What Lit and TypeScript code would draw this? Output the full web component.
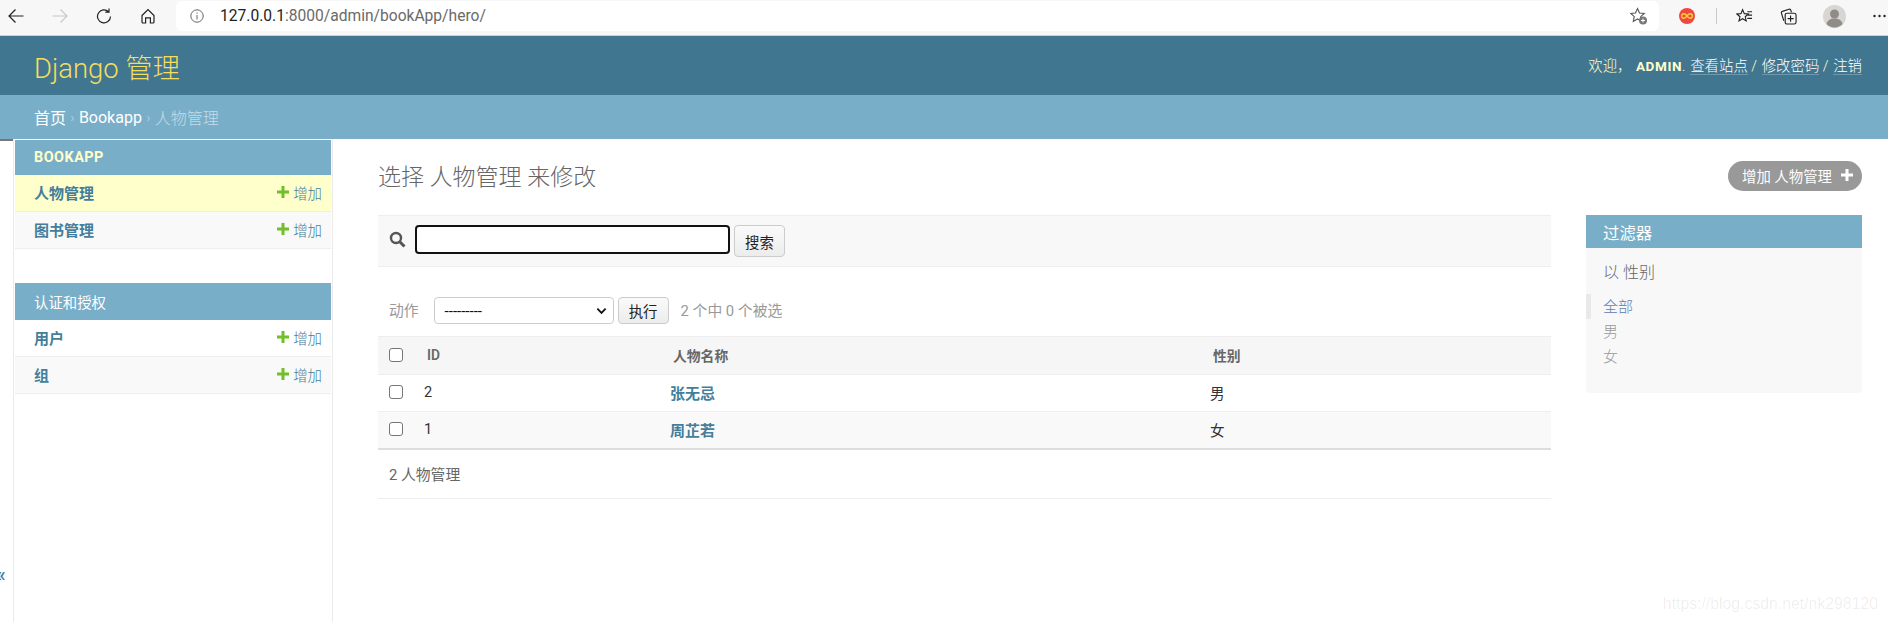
import { LitElement, html, css } from "lit";
import { customElement } from "lit/decorators.js";

const plus = (c: string, s = 12) => html`<svg width=${s} height=${s} viewBox="0 0 12 12"><path d="M4.500 0h3v4.500H12v3H7.500V12h-3V7.500H0v-3h4.500z" fill=${c}/></svg>`;

@customElement("app-root")
export class AppRoot extends LitElement {
  static styles = css`
    :host { display: block; width: 1888px; height: 622px; overflow: hidden; position: relative; background: #fff;
      font-family: Roboto, "Noto Sans CJK SC", sans-serif; font-size: 14.4px; color: #333; }
    * { box-sizing: border-box; }
    a { text-decoration: none; color: inherit; }
    .browser { height: 36px; background: #f7f7f7; border-bottom: 1px solid #d0d0d0; display: flex; align-items: flex-start; }
    .nav { width: 176px; height: 31px; display: flex; align-items: center; padding-left: 8px; gap: 28px; flex: none; }
    .nav svg { display: block; }
    .addr { width: 1483px; height: 30px; margin-top: 1px; background: #fff; border-radius: 6px; display: flex; align-items: center; padding: 0 11px 0 14px; flex: none; font-size: 15.6px; color: #6a6a6a; font-family: Roboto, sans-serif; }
    .addr b { font-weight: 400; color: #222; }
    .addr .url { margin-left: 16px; flex: 1; }
    .tools { flex: 1; height: 32px; display: flex; align-items: center; }
    .tools > * { flex: none; }
    .t1 { margin-left: 20px; }
    .sep { width: 1px; height: 16px; background: #c8c8c8; margin-left: 21px; }
    .t2 { margin-left: 19px; }
    .t3 { margin-left: 27px; }
    .t4 { margin-left: 26px; }
    .t5 { margin-left: 27px; }

    .header { height: 59px; background: #417690; display: flex; align-items: center; justify-content: space-between; padding: 0 26px 0 34px; }
    .brand { font-size: 27.4px; font-weight: 300; color: #f5dd5d; }
    .user { font-size: 14.4px; font-weight: 300; color: #ffc; margin-top: -2px; }
    .user strong { font-weight: 700; margin-left: 1px; font-size: 13.5px; letter-spacing: .6px; }
    .user a { color: #fff; border-bottom: 1px solid rgba(255,255,255,.25); line-height: 1.05; display: inline-block; margin-left: 1.2px; }
    .crumb { height: 44px; background: #79aec8; display: flex; align-items: center; padding-left: 34px; font-size: 16px; color: #c4dce8; font-weight: 300; }
    .crumb a { color: #fff; font-weight: 400; }
    .crumb i { font-style: normal; margin: 0 4.500px; font-size: 13px; }

    .body { display: flex; height: 483px; }
    .side { width: 320px; margin-left: 13px; flex: none; padding: 1px 1px 0; border-left: 1px solid #eaeaea; border-right: 1px solid #eaeaea; }
    .cap { height: 35px; background: #79aec8; color: #ffc; font-size: 14.4px; font-weight: 700; letter-spacing: .5px; display: flex; align-items: center; padding-left: 19px; }
    .cap.alt { height: 37px; color: #fff; font-weight: 400; letter-spacing: 0; margin-top: 34px; }
    .row { height: 37px; border-bottom: 1px solid #eee; display: flex; align-items: center; justify-content: space-between; padding: 0 9px 2px 19px; color: #447e9b; background: #fff; }
    .row.odd { background: #f9f9f9; }
    .row.cur { background: #ffc; }
    .row b { font-size: 15px; font-weight: 600; }
    .row span { display: flex; align-items: center; gap: 4px; font-size: 14.4px; font-weight: 300; }

    .main { flex: 1; min-width: 0; padding: 19px 26px 0 45px; }
    .top { display: flex; justify-content: space-between; align-items: flex-start; height: 57px; }
    h1 { margin: 5px 0 0; font-size: 23px; font-weight: 300; color: #666; line-height: 30px; }
    .addbtn { margin-top: 3px; height: 30px; width: 134px; background: #999; border-radius: 15px; color: #fff; display: flex; align-items: center; justify-content: flex-start; gap: 9px; padding: 0 0 2px 14px; font-size: 14.4px; }
    .cols { display: flex; gap: 35px; }
    .list { width: 1173px; flex: none; }
    .search { height: 52px; background: #f8f8f8; border-top: 1px solid #eee; border-bottom: 1px solid #eee; display: flex; align-items: flex-start; padding: 9px 0 0 11px; }
    .search svg { margin: 6px 9px 0 0; }
    .search .input { width: 315px; height: 29px; border: 2px solid #111; border-radius: 4px; background: #fff; }
    .btn { height: 32px; width: 51px; justify-content: center; background: linear-gradient(#fafafa, #ececec); border: 1px solid #ccc; border-radius: 4px; font-size: 14.4px; color: #222; display: flex; align-items: center; margin-left: 4px; }
    .actions { height: 69px; display: flex; align-items: center; padding: 30px 0 12px 11px; color: #999; font-size: 14.8px; }
    .actions > span { margin-top: -2px; }
    .sel { width: 180px; height: 27px; border: 1px solid #ccc; border-radius: 4px; margin-left: 15px; background: #fff; display: flex; align-items: center; justify-content: space-between; padding: 0 6px 0 10px; color: #111; font-size: 15px; }
    .actions .btn { height: 27px; margin-left: 4px; }
    .count { margin-left: 12px; }
    .tr { display: grid; grid-template-columns: 46px 246px 540px 1fr; align-items: center; }
    .th { height: 39px; background: #f6f6f6; border-top: 1px solid #eee; border-bottom: 1px solid #eee; font-size: 13.8px; font-weight: 600; color: #666; padding-bottom: 1px; }
    .th div:nth-child(n+2) { padding-left: 3px; }
    .td { height: 37px; border-bottom: 1px solid #eee; font-size: 14.6px; color: #333; padding-bottom: 2px; }
    .td.odd { background: #f9f9f9; border-bottom: 2px solid #ddd; height: 38px; }
    .td a { color: #447e9b; font-weight: 600; font-size: 15px; }
    .cb { width: 14px; height: 14px; border: 1px solid #767676; border-radius: 3px; background: #fff; margin-left: 11px; }
    .pager { height: 49px; border-bottom: 1px solid #eee; display: flex; align-items: center; padding: 0 0 2px 11px; color: #666; font-size: 14.8px; }
    .filter { width: 276px; height: 178px; flex: none; background: #f8f8f8; }
    .filter h2 { margin: 0; height: 33px; background: #79aec8; color: #fff; font-size: 16.4px; font-weight: 400; display: flex; align-items: center; padding-left: 17px; }
    .filter h3 { margin: 15px 0 11px; padding-left: 17px; font-size: 16px; font-weight: 300; color: #666; line-height: 20px; }
    .filter ul { list-style: none; margin: 0; padding: 0; }
    .filter li { height: 25px; display: flex; align-items: center; padding: 0 0 2px 17px; font-size: 15px; color: #999; font-weight: 300; }
    .filter li.on { color: #5b80b2; border-left: 5px solid #e9e9e9; padding-left: 12px; }

    .tab { position: absolute; left: 0; top: 139px; width: 13px; height: 2px; background: #777; }
    .tog { position: absolute; left: -4px; top: 562px; color: #447e9b; font-size: 20px; font-weight: 500; line-height: 24px; }
    .wm { position: absolute; right: 10px; bottom: 9px; color: rgba(0,0,0,.07); font-size: 15.8px; font-family: "Liberation Sans", sans-serif; }
  `;

  render() {
    const grn = "#70bf2b";
    return html`
      <div class="browser">
        <div class="nav">
          <svg width="16" height="16" viewBox="0 0 16 16" fill="none" stroke="#222" stroke-width="1.200"><path d="M15.500 8H1M7.500 1.500 1 8l6.500 6.500"/></svg>
          <svg width="16" height="16" viewBox="0 0 16 16" fill="none" stroke="#c8c8c8" stroke-width="1.200"><path d="M.5 8H15M8.500 1.500 15 8l-6.500 6.500"/></svg>
          <svg width="16" height="16" viewBox="0 0 16 16" fill="none" stroke="#222" stroke-width="1.200"><path d="M14.500 8.500a6.500 6.500 0 1 1-2-4.800M13 .5v3.700H9.300"/></svg>
          <svg width="16" height="16" viewBox="0 0 16 16" fill="none" stroke="#222" stroke-width="1.200"><path d="M2 7.500 8 1.500l6 6V14a1 1 0 0 1-1 1h-2.600V9.800H5.600V15H3a1 1 0 0 1-1-1z"/></svg>
        </div>
        <div class="addr">
          <svg width="14" height="14" viewBox="0 0 14 14" fill="none" stroke="#666"><circle cx="7" cy="7" r="6.200"/><path d="M7 6v4.500M7 3.500v1.200"/></svg>
          <div class="url"><b>127.0.0.1</b>:8000/admin/bookApp/hero/</div>
          <svg width="18" height="18" viewBox="0 0 18 18"><path d="M7.500 1.500 9.500 6l4.800.5-3.600 3.200 1 4.800-4.200-2.500-4.200 2.500 1-4.800L.7 6.500 5.500 6z" fill="none" stroke="#555" stroke-width="1.100"/><circle cx="13" cy="13.500" r="4" fill="#777"/><path d="M11 13.500h4M13 11.500v4" stroke="#fff"/></svg>
        </div>
        <div class="tools">
          <svg class="t1" width="16" height="16" viewBox="0 0 18 18"><circle cx="9" cy="9" r="9" fill="#f0483e"/><path d="M9 9C7.500 7 6.500 6.500 5.500 6.500a2.500 2.500 0 0 0 0 5C6.500 11.500 7.500 11 9 9s2.500-2.500 3.500-2.500a2.500 2.500 0 0 1 0 5c-1 0-2-.5-3.500-2.500z" fill="none" stroke="#fbd03a" stroke-width="1.500"/></svg>
          <div class="sep"></div>
          <svg class="t2" width="17" height="17" viewBox="0 0 18 18" fill="none" stroke="#222" stroke-width="1.200"><path d="M7 1.800 8.800 6l4.200.4-3.200 2.900 1 4.400L7 11.400l-3.800 2.300 1-4.400L1 6.400 5.200 6zM12 4h5M12.500 7.500H17M12 11h5"/></svg>
          <svg class="t3" width="17" height="17" viewBox="0 0 18 18" fill="none" stroke="#222" stroke-width="1.200"><path d="M4 13.500 1.500 5.500a1.500 1.500 0 0 1 1-1.900L9.500 1.300a1.500 1.500 0 0 1 1.900 1l.7 2.200"/><rect x="5.500" y="5.500" width="11.500" height="11.500" rx="2"/><path d="M11.200 8v6.500M8 11.200h6.500"/></svg>
          <svg class="t4" width="23" height="23" viewBox="0 0 23 23"><circle cx="11.500" cy="11.500" r="11.500" fill="#d8d6d3"/><circle cx="11.500" cy="9" r="4.500" fill="#8f8b87"/><path d="M3.500 19c1-4 4-5.500 8-5.500s7 1.500 8 5.500a11 11 0 0 1-16 0z" fill="#8f8b87"/></svg>
          <svg class="t5" width="13" height="4" viewBox="0 0 13 4"><circle cx="1.500" cy="2" r="1.200" fill="#222"/><circle cx="6.500" cy="2" r="1.200" fill="#222"/><circle cx="11.500" cy="2" r="1.200" fill="#222"/></svg>
        </div>
      </div>

      <div class="header">
        <div class="brand">Django 管理</div>
        <div class="user">欢迎， <strong>ADMIN</strong>. <a>查看站点</a> / <a>修改密码</a> / <a>注销</a></div>
      </div>
      <div class="crumb"><a>首页</a><i>›</i><a>Bookapp</a><i>›</i>人物管理</div>

      <div class="body">
        <div class="side">
          <div class="cap">BOOKAPP</div>
          <div class="row cur"><b>人物管理</b><span>${plus(grn)}增加</span></div>
          <div class="row odd"><b>图书管理</b><span>${plus(grn)}增加</span></div>
          <div class="cap alt">认证和授权</div>
          <div class="row"><b>用户</b><span>${plus(grn)}增加</span></div>
          <div class="row odd"><b>组</b><span>${plus(grn)}增加</span></div>
        </div>
        <div class="main">
          <div class="top">
            <h1>选择 人物管理 来修改</h1>
            <a class="addbtn">增加 人物管理 ${plus("#fff")}</a>
          </div>
          <div class="cols">
            <div class="list">
              <div class="search">
                <svg width="17" height="17" viewBox="0 0 17 17" fill="none" stroke="#555"><circle cx="7" cy="7" r="5" stroke-width="2.400"/><path d="M11 11l4.500 4.500" stroke-width="3"/></svg>
                <div class="input"></div>
                <div class="btn">搜索</div>
              </div>
              <div class="actions">
                <span>动作</span>
                <div class="sel"><span>---------</span><svg width="11" height="8" viewBox="0 0 12 8" fill="none" stroke="#111" stroke-width="2"><path d="M1.500 1.500 6 6l4.500-4.500"/></svg></div>
                <div class="btn">执行</div>
                <span class="count">2 个中 0 个被选</span>
              </div>
              <div class="tr th"><div><div class="cb"></div></div><div>ID</div><div>人物名称</div><div>性别</div></div>
              <div class="tr td"><div><div class="cb"></div></div><div>2</div><div><a>张无忌</a></div><div>男</div></div>
              <div class="tr td odd"><div><div class="cb"></div></div><div>1</div><div><a>周芷若</a></div><div>女</div></div>
              <div class="pager">2 人物管理</div>
            </div>
            <div class="filter">
              <h2>过滤器</h2>
              <h3>以 性别</h3>
              <ul><li class="on">全部</li><li>男</li><li>女</li></ul>
            </div>
          </div>
        </div>
      </div>
      <div class="tab"></div>
      <div class="tog">«</div>
      <div class="wm">https://blog.csdn.net/nk298120</div>
    `;
  }
}
